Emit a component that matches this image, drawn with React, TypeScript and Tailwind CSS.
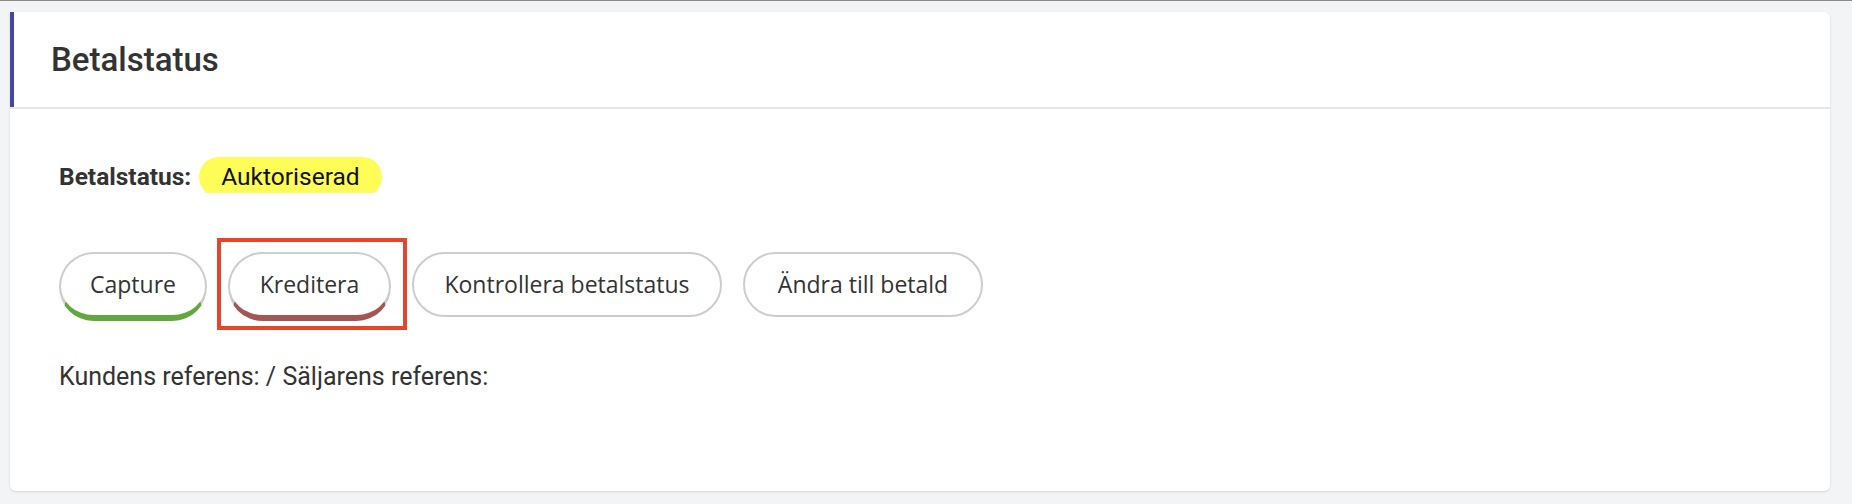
import React from "react";

interface ActionButton {
	label: string;
	width: string;
	accent?: "green" | "red";
	highlighted?: boolean;
}

const buttons: ActionButton[] = [
	{ label: "Capture", width: "w-[148px]", accent: "green" },
	{ label: "Kreditera", width: "w-[163px]", accent: "red", highlighted: true },
	{ label: "Kontrollera betalstatus", width: "w-[310px]" },
	{ label: "Ändra till betald", width: "w-[240px]" },
];

function PayButton({ label, width, accent, highlighted }: ActionButton) {
	let accentClass = "h-[65px]";
	if (accent === "green") accentClass = "h-[69px] border-b-[6px] border-b-[#62a83c]";
	if (accent === "red") accentClass = "h-[69px] border-b-[6px] border-b-[#a65555]";

	return (
		<div className="relative">
			<button
				className={`${width} ${accentClass} flex items-center justify-center rounded-full border-2 border-[#cdcdcd] bg-white text-[23px] text-[#333] font-['Open_Sans',sans-serif]`}
			>
				{label}
			</button>
			{highlighted && (
				<div className="pointer-events-none absolute -left-[11px] -top-[14px] h-[92px] w-[190px] border-4 border-[#e8432b]" />
			)}
		</div>
	);
}

export default function App() {
	return (
		<div className="min-h-[504px] border-t border-[#8a8a8a] bg-[#f3f4f6] pl-[10px] pr-[22px] pt-[11px] font-['Roboto',sans-serif] text-[#333]">
			<div className="rounded-md rounded-tl-none bg-white shadow-sm">
				<div className="border-b-2 border-[#e6e6e6]">
					<div className="flex h-[95px] items-center border-l-4 border-[#4545a5] pl-[37px]">
						<h2 className="text-[33px] font-medium">Betalstatus</h2>
					</div>
				</div>

				<div className="pl-[49px] pt-[48px] pb-[96px]">
					<div className="flex items-start gap-2">
						<span className="block h-[40px] text-[24.5px] font-bold leading-[40px]">Betalstatus:</span>
						<span className="block h-[36px] overflow-hidden">
							<span className="block h-[40px] rounded-full bg-[#fefc57] px-[22px] text-[24.5px] leading-[40px] text-[#111]">
								Auktoriserad
							</span>
						</span>
					</div>

					<div className="mt-[55px] flex items-start gap-[21px]">
						{buttons.map((b) => (
							<PayButton key={b.label} {...b} />
						))}
					</div>

					<p className="mt-[38px] text-[25px] leading-[36px]">Kundens referens: / Säljarens referens:</p>
				</div>
			</div>
		</div>
	);
}
